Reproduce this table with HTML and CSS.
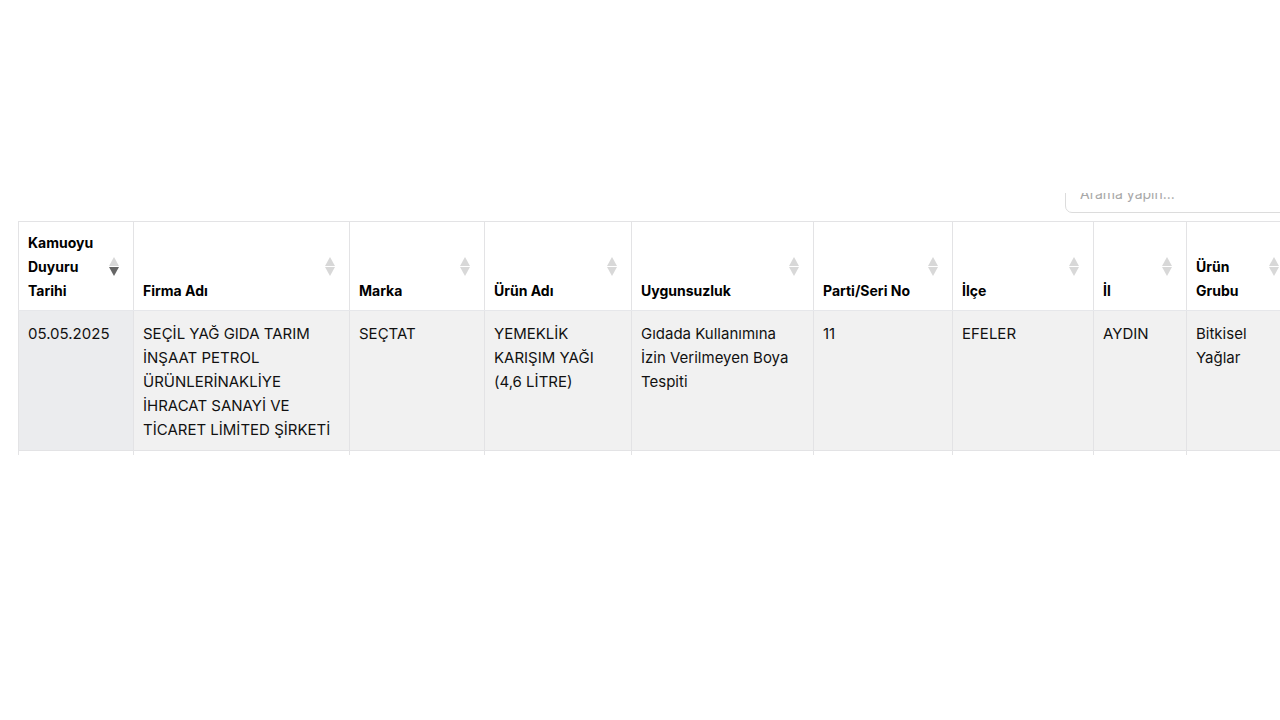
FILE: index.html
```html
<!DOCTYPE html>
<html lang="tr">
<head>
<meta charset="utf-8">
<title>Kamuoyu Duyurusu</title>
<link rel="stylesheet" href="styles.css">
</head>
<body>
<div class="page">
  <div class="wrap">
    <div class="search-row">
      <input class="search" type="search" placeholder="Arama yapın...">
    </div>
    <div class="table-clip">
      <table class="data">
        <colgroup>
          <col class="c1"><col class="c2"><col class="c3"><col class="c4"><col class="c5"><col class="c6"><col class="c7"><col class="c8"><col class="c9">
        </colgroup>
        <thead>
          <tr>
            <th class="sorted">Kamuoyu Duyuru Tarihi</th>
            <th>Firma Adı</th>
            <th>Marka</th>
            <th>Ürün Adı</th>
            <th>Uygunsuzluk</th>
            <th>Parti/Seri No</th>
            <th>İlçe</th>
            <th>İl</th>
            <th>Ürün Grubu</th>
          </tr>
        </thead>
        <tbody>
          <tr class="odd">
            <td class="sorted">05.05.2025</td>
            <td>SEÇİL YAĞ GIDA TARIM İNŞAAT PETROL ÜRÜNLERİNAKLİYE İHRACAT SANAYİ VE TİCARET LİMİTED ŞİRKETİ</td>
            <td>SEÇTAT</td>
            <td>YEMEKLİK KARIŞIM YAĞI (4,6 LİTRE)</td>
            <td>Gıdada Kullanımına İzin Verilmeyen Boya Tespiti</td>
            <td>11</td>
            <td>EFELER</td>
            <td>AYDIN</td>
            <td>Bitkisel Yağlar</td>
          </tr>
          <tr class="even">
            <td class="sorted">&nbsp;</td>
            <td>&nbsp;</td>
            <td>&nbsp;</td>
            <td>&nbsp;</td>
            <td>&nbsp;</td>
            <td>&nbsp;</td>
            <td>&nbsp;</td>
            <td>&nbsp;</td>
            <td>&nbsp;</td>
          </tr>
        </tbody>
      </table>
    </div>
  </div>
</div>
</body>
</html>
```
FILE: styles.css
```css
html, body {
  margin: 0;
  padding: 0;
  background: #ffffff;
  overflow: hidden;
}

body {
  font-family: Inter, Roboto, "Liberation Sans", Arial, sans-serif;
  font-size: 14px;
  color: #111;
}

.page {
  width: 1280px;
  height: 720px;
  overflow: hidden;
  padding-top: 193px;
  box-sizing: border-box;
}

.wrap {
  margin-left: 18px;
  width: 1275px;
}

.search-row {
  height: 20px;
  overflow: hidden;
  display: flex;
  justify-content: flex-end;
  align-items: flex-end;
  margin-bottom: 8px;
}

.search {
  width: 228px;
  height: 40px;
  box-sizing: border-box;
  border: 1px solid #dcdcdc;
  border-radius: 7px;
  padding: 0 14px;
  font-family: inherit;
  font-size: 14px;
  color: #333;
  background: #fff;
  outline: none;
}

.search::placeholder {
  color: #a8a8a8;
}

.table-clip {
  height: 234px;
  overflow: hidden;
}

.data {
  border-collapse: collapse;
  table-layout: fixed;
  width: 1275px;
}

.c1 { width: 115px; }
.c2 { width: 216px; }
.c3 { width: 135px; }
.c4 { width: 147px; }
.c5 { width: 182px; }
.c6 { width: 139px; }
.c7 { width: 141px; }
.c8 { width: 93px; }
.c9 { width: 107px; }

.data th,
.data td {
  border: 1px solid #e3e3e5;
  text-align: left;
  line-height: 24px;
}

.data th {
  position: relative;
  background: #fff;
  color: #000;
  font-weight: 700;
  font-size: 14px;
  vertical-align: bottom;
  padding: 9px 26px 7px 9px;
  border-bottom: 1px solid #e6e7ea;
}

.data th::before,
.data th::after {
  content: "";
  position: absolute;
  right: 14px;
  width: 0;
  height: 0;
  border-left: 5px solid transparent;
  border-right: 5px solid transparent;
}

.data th::before {
  top: 35px;
  border-bottom: 9px solid #d8d8d8;
}

.data th::after {
  top: 45px;
  border-top: 9px solid #d8d8d8;
}

.data th.sorted::after {
  border-top-color: #666666;
}

.data td {
  vertical-align: top;
  padding: 11px 9px 8px 9px;
  color: #111;
  font-size: 15px;
}

.data tr.odd td {
  background: #f1f1f1;
}

.data tr.odd td.sorted {
  background: #ebecee;
}

.data tr.even td {
  background: #fff;
  border-top: 1px solid #e6e8ee;
}
```
